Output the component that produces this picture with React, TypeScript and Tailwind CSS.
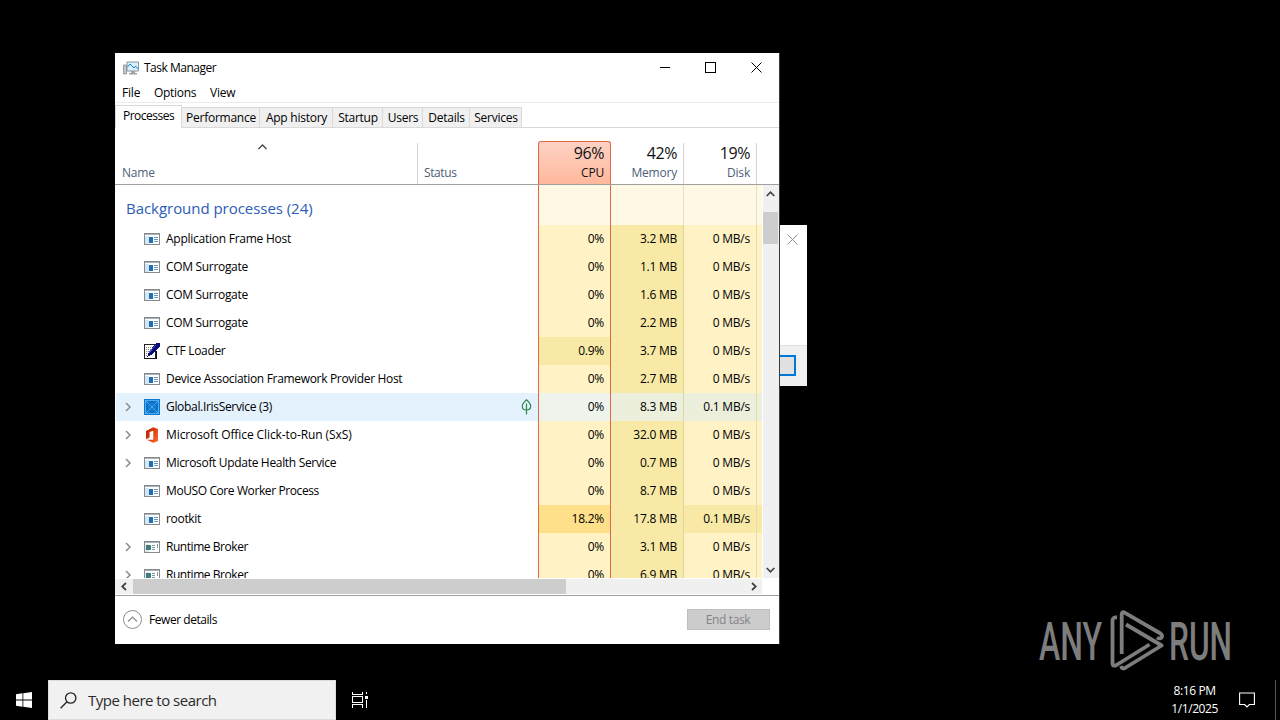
import type { ReactNode } from "react";

type IconKind = "app" | "ctf" | "iris" | "office" | "broker";

interface Process {
  name: string;
  icon: IconKind;
  cpu: string;
  memory: string;
  disk: string;
  expandable?: boolean;
  selected?: boolean;
  tracking?: string;
}

const TABS = [
  { label: "Performance", width: "w-[78px]" },
  { label: "App history", width: "w-[73px]" },
  { label: "Startup", width: "w-[50px]" },
  { label: "Users", width: "w-[40px]" },
  { label: "Details", width: "w-[47px]" },
  { label: "Services", width: "w-[52px]" },
];

const PROCESSES: Process[] = [
  { name: "Application Frame Host", icon: "app", cpu: "0%", memory: "3.2 MB", disk: "0 MB/s", tracking: "tracking-[-0.25px]" },
  { name: "COM Surrogate", icon: "app", cpu: "0%", memory: "1.1 MB", disk: "0 MB/s" },
  { name: "COM Surrogate", icon: "app", cpu: "0%", memory: "1.6 MB", disk: "0 MB/s" },
  { name: "COM Surrogate", icon: "app", cpu: "0%", memory: "2.2 MB", disk: "0 MB/s" },
  { name: "CTF Loader", icon: "ctf", cpu: "0.9%", memory: "3.7 MB", disk: "0 MB/s" },
  { name: "Device Association Framework Provider Host", icon: "app", cpu: "0%", memory: "2.7 MB", disk: "0 MB/s" },
  { name: "Global.IrisService (3)", icon: "iris", cpu: "0%", memory: "8.3 MB", disk: "0.1 MB/s", expandable: true, selected: true },
  { name: "Microsoft Office Click-to-Run (SxS)", icon: "office", cpu: "0%", memory: "32.0 MB", disk: "0 MB/s", expandable: true, tracking: "tracking-[-0.09px]" },
  { name: "Microsoft Update Health Service", icon: "app", cpu: "0%", memory: "0.7 MB", disk: "0 MB/s", expandable: true },
  { name: "MoUSO Core Worker Process", icon: "app", cpu: "0%", memory: "8.7 MB", disk: "0 MB/s", tracking: "tracking-[-0.4px]" },
  { name: "rootkit", icon: "app", cpu: "18.2%", memory: "17.8 MB", disk: "0.1 MB/s" },
  { name: "Runtime Broker", icon: "broker", cpu: "0%", memory: "3.1 MB", disk: "0 MB/s", expandable: true, tracking: "tracking-[-0.45px]" },
  { name: "Runtime Broker", icon: "broker", cpu: "0%", memory: "6.9 MB", disk: "0 MB/s", expandable: true, tracking: "tracking-[-0.45px]" },
];

function cpuColor(p: Process) {
  if (p.selected) return "bg-[#eef3ec]";
  if (p.cpu === "18.2%") return "bg-[#ffe08a]";
  if (p.cpu !== "0%") return "bg-[#f8eaa6]";
  return "bg-[#fff2c4]";
}

function diskColor(p: Process) {
  if (p.selected) return "bg-[#ecefdc]";
  return p.disk === "0 MB/s" ? "bg-[#fff2c4]" : "bg-[#f8eaa6]";
}

function ProcessIcon({ kind }: { kind: IconKind }) {
  if (kind === "ctf") {
    return (
      <svg width="16" height="16" viewBox="0 0 16 16" shapeRendering="crispEdges">
        <path d="M.5 1.500h11v14H.5z" fill="#fff" stroke="#222" />
        <path d="M2 4.500h8M2 6.500h7M2 8.500h6M2 10.500h4M2 12.500h3" stroke="#888" strokeDasharray="1 1" />
        <path d="M1 15.500h11V8" fill="none" stroke="#111" />
        <path d="M12 0h4v3L7 12l-4 2 2-5z" fill="#0a0a78" />
        <path d="M12 2 5 9.500" stroke="#4a5ac0" />
      </svg>
    );
  }
  if (kind === "iris") {
    return (
      <svg width="16" height="16" viewBox="0 0 16 16">
        <path d="M0 0h16v16H0z" fill="#0f79d2" />
        <path d="M1.500 1.500l13 13M14.500 1.500l-13 13M1.500 1.500h13v13h-13z" fill="none" stroke="#5db4f2" strokeWidth=".8" />
        <path d="M8 2l6 6-6 6-6-6z" fill="none" stroke="#0a5db0" strokeWidth=".5" />
      </svg>
    );
  }
  if (kind === "office") {
    return (
      <svg width="16" height="16" viewBox="0 0 16 16">
        <defs>
          <linearGradient id="office" x1="0" x2="1" y1="0" y2=".6">
            <stop offset="0" stopColor="#b4200c" />
            <stop offset=".6" stopColor="#dc3c0a" />
            <stop offset="1" stopColor="#f2622a" />
          </linearGradient>
        </defs>
        <path d="M9.300.3 14 2v12l-4.700 1.700L3 12.800h6.300V3.700L5.600 4.900v5.600L2 12.300V4z" fill="url(#office)" />
      </svg>
    );
  }
  const broker = kind === "broker";
  return (
    <svg width="16" height="16" viewBox="0 0 16 16" shapeRendering="crispEdges">
      <path d="M.5 2.500h15v11H.5z" fill="#fff" stroke="#858b8f" />
      <path d="M1 3h14v1H1z" fill="#a9afb3" />
      <path d="M1 5h4v8H1z" fill={broker ? "#e4e8e8" : "#d4e6f4"} />
      {broker ? (
        <path d="M2 6h5v5H2z" fill="#3d7f80" />
      ) : (
        <path d="M5 6h4v6H5z" fill="#1d6fb4" />
      )}
      <path
        d={broker ? "M8 6.500h3M8 8.500h3M8 10.500h3M13.500 5v4" : "M10 6.500h4M10 8.500h4M10 10.500h4"}
        stroke={broker ? "#7f9a9a" : "#6d9bc4"}
      />
    </svg>
  );
}

function Chevron({ d, className, width = 10, height = 10 }: { d: string; className: string; width?: number; height?: number }) {
  return (
    <svg width={width} height={height} viewBox={`0 0 ${width} ${height}`} fill="none" stroke="currentColor" className={className}>
      <path d={d} />
    </svg>
  );
}

function ProcessRow({ process }: { process: Process }) {
  return (
    <div className="flex h-7 shrink-0 items-stretch text-[12px] leading-[27px] tracking-[-0.25px] text-black">
      <div className={`flex w-[422px] items-center ${process.selected ? "bg-[#e4f2fe]" : ""}`}>
        <div className="flex w-[28px] justify-center pr-[4px]">
          {process.expandable && <Chevron d="M3 1l4 4-4 4" className="text-[#8b8b8b] [stroke-width:1.5]" />}
        </div>
        <ProcessIcon kind={process.icon} />
        <span className={`ml-[6px] self-start whitespace-nowrap ${process.tracking ?? "tracking-[-0.32px]"}`}>{process.name}</span>
        {process.selected && (
          <svg width="12" height="16" viewBox="0 0 12 16" fill="none" stroke="#2f8a4c" strokeWidth="1.2" className="mr-[5px] ml-auto">
            <path d="M5.500 .8C3 3 1.300 5 1.300 7.200 1.300 9.600 3 11 5.500 11s4.200-1.400 4.200-3.800C9.700 5 8 3 5.500 .8zM5.500 4.500V15.500" />
          </svg>
        )}
      </div>
      <div className={`w-[73px] border-x border-[#e0694a] pr-[6px] text-right ${cpuColor(process)}`}>{process.cpu}</div>
      <div className={`w-[73px] border-r border-[#ded7a0] pr-[6px] text-right ${process.selected ? "bg-[#ebefdc]" : "bg-[#f8eaa6]"}`}>{process.memory}</div>
      <div className={`w-[73px] border-r border-[#e6dcab] pr-[6px] text-right ${diskColor(process)}`}>{process.disk}</div>
      <div className={`w-[5px] ${diskColor(process)}`} />
    </div>
  );
}

function MetricHeader({ value, label, className }: { value: string; label: string; className: string }) {
  return (
    <div className={`flex w-[73px] flex-col items-end justify-end pb-[1px] ${className}`}>
      <span className="text-[16px] leading-[20px] tracking-[-0.4px] text-[#111]">{value}</span>
      <span className="text-[12px] leading-[20px] tracking-[-0.2px]">{label}</span>
    </div>
  );
}

function Caption({ children }: { children: ReactNode }) {
  return <span className="flex w-[46px] items-center justify-center">{children}</span>;
}

function TaskManager() {
  return (
    <div className="flex h-[591px] w-[665px] flex-col border-r border-[#3a3a3a] bg-white text-[12px] text-black">
      {/* Title bar */}
      <div className="flex h-[29px] shrink-0 items-center pl-[8px]">
        <svg width="16" height="16" viewBox="0 0 16 16">
          <path d="M.5 5h3v9h-3z" fill="#c3c7ca" stroke="#868b90" strokeWidth=".8" />
          <path d="M4 2h11.500v9H4z" fill="#d9effb" stroke="#8796a3" />
          <path d="M4.500 7l2.500-3 4 4 1.500-2 2.500 3" fill="none" stroke="#2186c4" />
          <path d="M8 11h4v2H8zM6 13h8v1.500H6z" fill="#9ba2a8" />
        </svg>
        <span className="mt-px ml-[5px] tracking-[-0.5px]">Task Manager</span>
        <div className="ml-auto flex">
          <Caption>
            <span className="ml-[2px] h-px w-[10px] bg-black" />
          </Caption>
          <Caption>
            <span className="ml-px size-[11px] border border-black" />
          </Caption>
          <Caption>
            <Chevron d="M.5 .5l10 10M10.500 .5l-10 10" width={11} height={11} className="ml-px text-black" />
          </Caption>
        </div>
      </div>
      {/* Menu */}
      <div className="flex h-[21px] shrink-0 items-center border-b border-[#ececec] pt-[2px] pl-[7px] tracking-[-0.2px]">
        <span className="w-[32px]">File</span>
        <span className="w-[56px] tracking-[-0.3px]">Options</span>
        <span>View</span>
      </div>
      {/* Tabs */}
      <div className="flex h-[25px] shrink-0 items-end border-b border-[#d9d9d9] tracking-[-0.25px]">
        <div className="-mb-px h-[23px] w-[67px] border border-b-0 border-[#d9d9d9] bg-white pl-[7px] leading-[20px] tracking-[-0.5px]">Processes</div>
        {TABS.map((tab) => (
          <div key={tab.label} className={`h-[20px] border-t border-r border-[#d9d9d9] bg-[#f0f0f0] pl-px text-center leading-[20px] whitespace-nowrap ${tab.width}`}>
            {tab.label}
          </div>
        ))}
      </div>
      {/* Column headers */}
      <div className="flex h-[57px] shrink-0 items-end border-b border-[#a0a0a0] text-[#4c607a]">
        <div className="flex h-[41px] w-[303px] flex-col border-r border-[#d5d5d5] pt-px pl-[7px]">
          <Chevron d="M.5 5l4-4 4 4" width={9} height={6} className="ml-[136px] text-[#444] [stroke-width:1.3]" />
          <span className="mt-[13px] leading-[20px] tracking-[-0.2px]">Name</span>
        </div>
        <div className="w-[120px] pb-[1px] pl-[6px] leading-[20px] tracking-[-0.4px]">Status</div>
        <MetricHeader value="96%" label="CPU" className="h-[43px] rounded-t-[3px] border border-b-0 border-[#e0694a] bg-linear-to-b from-[#fdd2c4] to-[#ffb89c] pr-[6px] text-[#111]" />
        <MetricHeader value="42%" label="Memory" className="h-[41px] border-r border-[#d5d5d5] pr-[6px]" />
        <MetricHeader value="19%" label="Disk" className="h-[41px] border-r border-[#d5d5d5] pr-[6px]" />
      </div>
      {/* Process list */}
      <div className="flex h-[393px] shrink-0">
        <div className="flex w-[647px] flex-col overflow-hidden pl-px">
          <div className="flex h-[40px] shrink-0">
            <div className="w-[422px] pl-[10px] text-[15px] leading-[46px] tracking-[-0.04px] text-[#2c5cb8]">Background processes (24)</div>
            <div className="w-[73px] border-x border-[#e0694a] bg-[#fff8e4]" />
            <div className="w-[73px] border-r border-[#e6dfc4] bg-[#fff8e4]" />
            <div className="w-[73px] border-r border-[#e6dfc4] bg-[#fff8e4]" />
            <div className="w-[5px] bg-[#fff8e4]" />
          </div>
          {PROCESSES.map((process, i) => (
            <ProcessRow key={i} process={process} />
          ))}
        </div>
        <div className="flex w-[17px] flex-col items-center border-l border-white bg-[#f0f0f0] pt-[6px] pr-px pb-[5px]">
          <Chevron d="M.7 5l3.800-3.800L8.300 5" width={9} height={6} className="text-[#404040] [stroke-width:1.7]" />
          <div className="mt-[15px] h-[32px] w-[15px] bg-[#cdcdcd]" />
          <Chevron d="M.7 1l3.800 3.800L8.300 1" width={9} height={6} className="mt-auto text-[#404040] [stroke-width:1.7]" />
        </div>
      </div>
      <div className="flex h-[18px] shrink-0 border-b border-[#a0a0a0] pt-px">
        <div className="flex h-[15px] w-[647px] items-center justify-between bg-[#f0f0f0]">
          <Chevron d="M5 1L1.200 4.500 5 8" width={6} height={9} className="ml-[6px] text-[#404040] [stroke-width:1.7]" />
          <div className="mr-auto ml-[6px] h-[15px] w-[433px] bg-[#cdcdcd]" />
          <Chevron d="M1 1l3.800 3.500L1 8" width={6} height={9} className="mr-[5px] text-[#404040] [stroke-width:1.7]" />
        </div>
      </div>
      {/* Footer */}
      <div className="flex flex-1 items-center pr-[9px] pb-px pl-[8px] tracking-[-0.45px]">
        <svg width="19" height="19" viewBox="0 0 19 19" fill="none" stroke="#8c8c8c">
          <circle cx="9.500" cy="9.500" r="9" />
          <path d="M5 11.500l4.500-4.500 4.500 4.500" strokeWidth="1.200" />
        </svg>
        <span className="mt-px ml-[7px]">Fewer details</span>
        <div className="ml-auto h-[21px] w-[83px] border border-[#bfbfbf] bg-[#cccccc] pr-px text-center leading-[19px] tracking-[-0.35px] text-[#838388]">End task</div>
      </div>
    </div>
  );
}

// Message box that sits behind the task manager window
function DialogBehind() {
  return (
    <div className="absolute top-[225px] left-[700px] flex h-[161px] w-[107px] flex-col bg-white">
      <div className="flex h-[120px] justify-end pt-[9px] pr-[9px]">
        <Chevron d="M.5 .5l10 10M10.500 .5l-10 10" width={11} height={11} className="text-[#8c8c8c]" />
      </div>
      <div className="flex flex-1 items-center justify-end border-t border-[#dfdfdf] bg-[#f0f0f0] pr-[11px] pb-[2px]">
        <div className="h-[21px] w-[70px] border-2 border-[#0078d7] bg-[#e1e1e1]" />
      </div>
    </div>
  );
}

function Watermark() {
  return (
    <svg width="194" height="64" viewBox="0 0 194 64" className="absolute top-[608px] left-[1038px]" fill="#7d7d7d">
      <text x="1" y="51.5" fontFamily="Roboto" fontSize="53" fontWeight="500" textLength="63" lengthAdjust="spacingAndGlyphs">ANY</text>
      <text x="131" y="51.5" fontFamily="Roboto" fontSize="53" fontWeight="500" textLength="63" lengthAdjust="spacingAndGlyphs">RUN</text>
      <g fill="none" stroke="#7d7d7d" strokeWidth="3.800" strokeLinejoin="round">
        <path d="M83.700 46V6Q84 3.300 87 4.800L122.500 25.500q3 2.500 .5 4.500-2 1-4-.5" />
        <path d="M79 9.500q-4.500-.5-4.500 3v42.500q0 4 4 2L111.500 36.500" />
        <path d="M88 16.500L123.700 37.500 87 60q-3 1.500-4-2" />
      </g>
    </svg>
  );
}

function Taskbar() {
  return (
    <div className="absolute inset-x-0 bottom-0 flex h-10 items-stretch bg-black text-white">
      <div className="flex w-12 items-center justify-center">
        <svg width="16" height="16" viewBox="0 0 16 16" fill="#fff">
          <path d="M0 2.200L6.500 1.300v6.200H0zM7.300 1.200L16 0v7.500H7.300zM0 8.400h6.500v6.300L0 13.800zM7.300 8.400H16V16l-8.700-1.200z" />
        </svg>
      </div>
      <div className="flex w-[288px] items-center border border-[#dcdcdc] bg-[#f1f1f1] pl-[11px] text-[15px] tracking-[-0.5px] text-[#2b2b2b]">
        <svg width="17" height="17" viewBox="0 0 17 17" fill="none" stroke="#222" strokeWidth="1.300">
          <circle cx="10.700" cy="6" r="5.200" />
          <path d="M7 9.800L.6 16.300" />
        </svg>
        <span className="ml-[11px]">Type here to search</span>
      </div>
      <div className="flex w-12 items-center justify-center">
        <svg width="16" height="16" viewBox="0 0 16 16" fill="none" stroke="#fff" shapeRendering="crispEdges">
          <path d="M.5 0v2.500h10V0M.5 15.500v-3h10v3M.5 4.500h10v6H.5zM14.500 0v2M14.500 8v7.500" />
          <path d="M13 4h3v3h-3z" fill="#fff" stroke="none" />
        </svg>
      </div>
      <div className="mr-[21px] ml-auto flex flex-col items-center pt-[2px] text-[12px] leading-[18px] tracking-[-0.4px]">
        <span>8:16 PM</span>
        <span>1/1/2025</span>
      </div>
      <div className="flex w-[36px] items-center">
        <svg width="16" height="16" viewBox="0 0 16 16" fill="none" stroke="#fff" strokeWidth="1.100">
          <path d="M.6 1h14.800v11.500h-5L8 15l-2.400-2.500h-5z" />
        </svg>
      </div>
      <div className="w-[5px] border-l border-[#555]" />
    </div>
  );
}

export default function App() {
  return (
    <div className="relative h-[720px] w-[1280px] overflow-hidden bg-black font-['Open_Sans','Noto_Sans',sans-serif]">
      <DialogBehind />
      <div className="absolute top-[53px] left-[115px]">
        <TaskManager />
      </div>
      <Watermark />
      <Taskbar />
    </div>
  );
}
